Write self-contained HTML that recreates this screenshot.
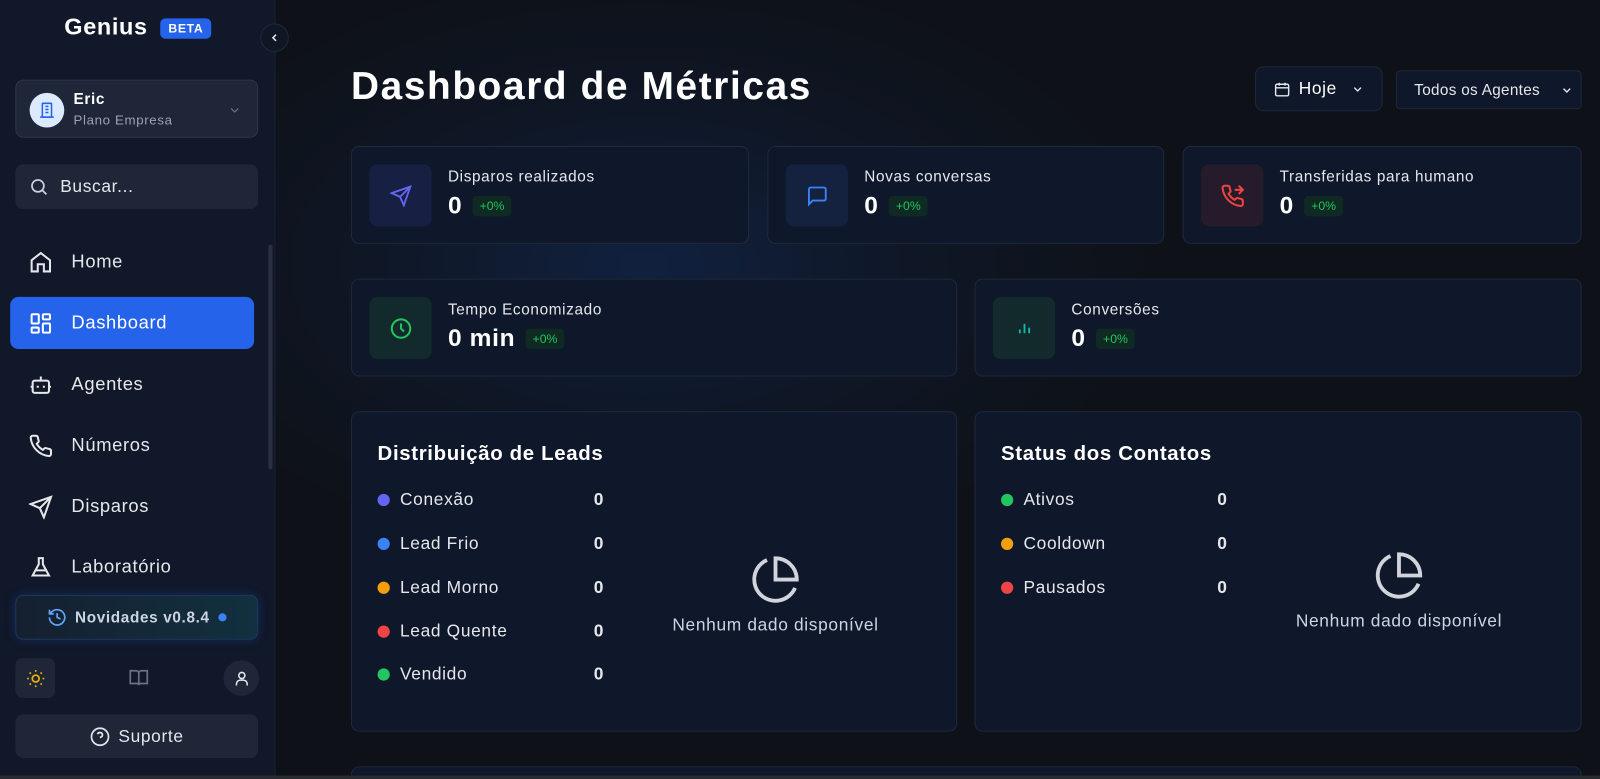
<!DOCTYPE html>
<html><head><meta charset="utf-8"><style>
*{box-sizing:border-box;margin:0;padding:0}
html,body{width:1600px;height:779px;overflow:hidden;background:#0e1117}
body{font-family:"Liberation Sans",sans-serif;color:#e5e7eb;position:relative;letter-spacing:0.04em}
#w{position:absolute;left:0;top:0;width:1568px;height:764px;transform:scale(1.0204);transform-origin:0 0}
.side{position:absolute;left:0;top:0;width:270px;height:760px;background:#101829;border-right:1px solid #1a2233}
.main{position:absolute;left:271px;top:0;width:1297px;height:760px;background:radial-gradient(ellipse 520px 300px at 360px 260px,#10213f 0%,#0f1624 55%,#0e1117 100%)}
.bottombar{position:absolute;left:0;top:760px;width:1568px;height:6px;background:#2a2b2f}
.abs{position:absolute}
.nav{position:absolute;left:10px;width:239px;height:51px;border-radius:8px;display:flex;align-items:center;padding-left:18px;font-size:18px;color:#e5e7eb}
.nav svg{margin-right:18px}
.card{position:absolute;background:#0f172a;border:1px solid #1e293b;border-radius:8px}
.ib{position:absolute;left:17px;top:17px;width:61px;height:61px;border-radius:8px;display:flex;align-items:center;justify-content:center}
.lbl{position:absolute;left:94px;top:21px;font-size:15px;color:#e5e7eb}
.val{position:absolute;left:94px;top:44px;font-size:24px;font-weight:bold;color:#fff;display:flex;align-items:center}
.pct{display:inline-block;margin-left:10px;background:#0f2a22;color:#22c55e;font-size:12px;font-weight:normal;padding:3px 7px;border-radius:4px;letter-spacing:0}
.row{position:absolute;left:25px;font-size:17px;color:#e5e7eb;display:flex;align-items:center;width:222px}
.row i{display:inline-block;width:12px;height:12px;border-radius:50%;margin-right:10px}
.row b{margin-left:auto;font-weight:bold}
</style></head><body><div id="w">
<div class="side">
  <div class="abs" style="left:63px;top:13px;font-size:23px;font-weight:bold;color:#fff">Genius</div>
  <div class="abs" style="left:157px;top:18px;background:#2563eb;color:#fff;font-size:12px;font-weight:bold;padding:3px 8px;border-radius:5px">BETA</div>
  <div class="abs" style="left:15px;top:78px;width:238px;height:57px;background:#1e2637;border:1px solid #2d3648;border-radius:8px">
    <div class="abs" style="left:13px;top:12px;width:34px;height:34px;border-radius:50%;background:#dbeafe;display:flex;align-items:center;justify-content:center">
      <svg width="18" height="18" viewBox="0 0 24 24" fill="none" stroke="#2563eb" stroke-width="2"><rect x="6" y="3" width="12" height="18" rx="1"/><path d="M3 21h18M10 7h4M10 11h4M10 15h4"/></svg></div>
    <div class="abs" style="left:56px;top:10px;font-size:15px;font-weight:bold;color:#fff">Eric</div>
    <div class="abs" style="left:56px;top:31px;font-size:13px;color:#9ca3af">Plano Empresa</div>
    <svg class="abs" style="left:207px;top:22px" width="14" height="14" viewBox="0 0 24 24" fill="none" stroke="#6b7280" stroke-width="2"><path d="M6 9l6 6 6-6"/></svg>
  </div>
  <div class="abs" style="left:15px;top:161px;width:238px;height:44px;background:#1e2637;border-radius:8px">
    <svg class="abs" style="left:13px;top:12px" width="20" height="20" viewBox="0 0 24 24" fill="none" stroke="#cbd5e1" stroke-width="2"><circle cx="11" cy="11" r="7"/><path d="M21 21l-5-5"/></svg>
    <div class="abs" style="left:44px;top:12px;font-size:17px;color:#e5e7eb">Buscar...</div>
  </div>
  <div class="nav" style="top:231px"><svg width="24" height="24" viewBox="0 0 24 24" fill="none" stroke="#e5e7eb" stroke-width="2"><path d="M3 10l9-7 9 7v11h-6v-7H9v7H3z"/></svg>Home</div>
  <div class="nav" style="top:291px;background:#2563eb;color:#fff"><svg width="24" height="24" viewBox="0 0 24 24" fill="none" stroke="#fff" stroke-width="2"><rect x="3" y="3" width="7" height="9" rx="1"/><rect x="14" y="3" width="7" height="5" rx="1"/><rect x="14" y="12" width="7" height="9" rx="1"/><rect x="3" y="16" width="7" height="5" rx="1"/></svg>Dashboard</div>
  <div class="nav" style="top:351px"><svg width="24" height="24" viewBox="0 0 24 24" fill="none" stroke="#e5e7eb" stroke-width="2"><rect x="4" y="8" width="16" height="12" rx="2"/><path d="M12 8V4M2 14h2M20 14h2M9 13v2M15 13v2"/></svg>Agentes</div>
  <div class="nav" style="top:411px"><svg width="24" height="24" viewBox="0 0 24 24" fill="none" stroke="#e5e7eb" stroke-width="2"><path d="M22 16.9v3a2 2 0 0 1-2.2 2A19.8 19.8 0 0 1 2.1 4.2 2 2 0 0 1 4.1 2h3a2 2 0 0 1 2 1.7c.1 1 .4 1.9.7 2.8a2 2 0 0 1-.5 2.1L8 9.9a16 16 0 0 0 6 6l1.3-1.3a2 2 0 0 1 2.1-.4c.9.3 1.8.6 2.8.7a2 2 0 0 1 1.7 2z"/></svg>Números</div>
  <div class="nav" style="top:471px"><svg width="24" height="24" viewBox="0 0 24 24" fill="none" stroke="#e5e7eb" stroke-width="2"><path d="M22 2L11 13M22 2l-7 20-4-9-9-4z"/></svg>Disparos</div>
  <div class="nav" style="top:530px"><svg width="24" height="24" viewBox="0 0 24 24" fill="none" stroke="#e5e7eb" stroke-width="2"><path d="M9 3h6M10 3v6L4 20h16L14 9V3M7 15h10"/></svg>Laboratório</div>
  <div class="abs" style="left:263px;top:240px;width:4px;height:220px;background:#283041;border-radius:2px"></div>
  <div class="abs" style="left:15px;top:583px;width:238px;height:44px;background:linear-gradient(90deg,#152030,#12303f);border:1px solid #1e3a5f;border-radius:8px;box-shadow:0 0 10px rgba(37,99,235,.25);display:flex;align-items:center;justify-content:center;font-size:15px;font-weight:bold;color:#cbd5e1">
    <svg width="20" height="20" viewBox="0 0 24 24" fill="none" stroke="#60a5fa" stroke-width="2" style="margin-right:8px"><path d="M3 12a9 9 0 1 0 3-6.7L3 8M3 3v5h5M12 7v5l4 2"/></svg>Novidades v0.8.4<span style="display:inline-block;width:8px;height:8px;border-radius:50%;background:#3b82f6;margin-left:9px"></span></div>
  <div class="abs" style="left:15px;top:645px;width:39px;height:39px;background:#1e2637;border-radius:7px;display:flex;align-items:center;justify-content:center">
    <svg width="20" height="20" viewBox="0 0 24 24" fill="none" stroke="#eab308" stroke-width="2"><circle cx="12" cy="12" r="4"/><path d="M12 2v2M12 20v2M4.9 4.9l1.4 1.4M17.7 17.7l1.4 1.4M2 12h2M20 12h2M4.9 19.1l1.4-1.4M17.7 6.3l1.4-1.4"/></svg></div>
  <svg class="abs" style="left:126px;top:654px" width="20" height="20" viewBox="0 0 24 24" fill="none" stroke="#6b7280" stroke-width="2"><path d="M2 4h7a3 3 0 0 1 3 3v14a2 2 0 0 0-2-2H2zM22 4h-7a3 3 0 0 0-3 3v14a2 2 0 0 1 2-2h8z"/></svg>
  <div class="abs" style="left:219px;top:647px;width:35px;height:35px;background:#1e2637;border-radius:50%;display:flex;align-items:center;justify-content:center">
    <svg width="18" height="18" viewBox="0 0 24 24" fill="none" stroke="#e5e7eb" stroke-width="2"><circle cx="12" cy="8" r="4"/><path d="M5 21v-2a5 5 0 0 1 5-5h4a5 5 0 0 1 5 5v2"/></svg></div>
  <div class="abs" style="left:15px;top:700px;width:238px;height:43px;background:#1e2637;border-radius:8px;display:flex;align-items:center;justify-content:center;font-size:17px;color:#e5e7eb">
    <svg width="20" height="20" viewBox="0 0 24 24" fill="none" stroke="#e5e7eb" stroke-width="2" style="margin-right:8px"><circle cx="12" cy="12" r="10"/><path d="M9.1 9a3 3 0 0 1 5.8 1c0 2-3 3-3 3M12 17h.01"/></svg>Suporte</div>
</div>
<div class="abs" style="left:255px;top:23px;width:28px;height:28px;border-radius:50%;background:#0f1624;border:1px solid #1e293b;display:flex;align-items:center;justify-content:center;z-index:3">
  <svg width="12" height="12" viewBox="0 0 24 24" fill="none" stroke="#e5e7eb" stroke-width="3"><path d="M15 6l-6 6 6 6"/></svg></div>
<div class="main">
  <div class="abs" style="left:73px;top:64px;font-size:38px;font-weight:bold;color:#fff;letter-spacing:1.6px">Dashboard de Métricas</div>
  <div class="abs" style="left:959px;top:65px;width:125px;height:44px;background:#0f172a;border:1px solid #1e293b;border-radius:8px;display:flex;align-items:center;justify-content:center;font-size:17px;color:#fff">
    <svg width="17" height="17" viewBox="0 0 24 24" fill="none" stroke="#e5e7eb" stroke-width="2" style="margin-right:8px"><rect x="3" y="5" width="18" height="16" rx="2"/><path d="M3 10h18M8 3v4M16 3v4"/></svg>Hoje<svg width="13" height="13" viewBox="0 0 24 24" fill="none" stroke="#e5e7eb" stroke-width="2.5" style="margin-left:14px"><path d="M6 9l6 6 6-6"/></svg></div>
  <div class="abs" style="left:1097px;top:69px;width:182px;height:38px;background:#0f172a;border:1px solid #1e293b;border-radius:4px;font-size:15px;color:#e5e7eb;padding:10px 0 0 17px;letter-spacing:0.02em">Todos os Agentes
    <svg class="abs" style="left:160px;top:12px" width="13" height="13" viewBox="0 0 24 24" fill="none" stroke="#e5e7eb" stroke-width="2.5"><path d="M6 9l6 6 6-6"/></svg></div>

  <div class="card" style="left:73px;top:143px;width:390px;height:96px"><div class="ib" style="background:#172042"><svg width="22" height="22" viewBox="0 0 24 24" fill="none" stroke="#6366f1" stroke-width="2"><path d="M22 2L11 13M22 2l-7 20-4-9-9-4z"/></svg></div><div class="lbl">Disparos realizados</div><div class="val">0<span class="pct">+0%</span></div></div>
  <div class="card" style="left:481px;top:143px;width:389px;height:96px"><div class="ib" style="background:#15223f"><svg width="22" height="22" viewBox="0 0 24 24" fill="none" stroke="#3b82f6" stroke-width="2"><path d="M21 15a2 2 0 0 1-2 2H7l-4 4V5a2 2 0 0 1 2-2h14a2 2 0 0 1 2 2z"/></svg></div><div class="lbl">Novas conversas</div><div class="val">0<span class="pct">+0%</span></div></div>
  <div class="card" style="left:888px;top:143px;width:391px;height:96px"><div class="ib" style="background:#251b2a"><svg width="24" height="24" viewBox="0 0 24 24" fill="none" stroke="#ef4444" stroke-width="2"><path d="M22 16.9v3a2 2 0 0 1-2.2 2A19.8 19.8 0 0 1 2.1 4.2 2 2 0 0 1 4.1 2h3a2 2 0 0 1 2 1.7c.1 1 .4 1.9.7 2.8a2 2 0 0 1-.5 2.1L8 9.9a16 16 0 0 0 6 6l1.3-1.3a2 2 0 0 1 2.1-.4c.9.3 1.8.6 2.8.7a2 2 0 0 1 1.7 2zM14 6h7M18 2l4 4-4 4"/></svg></div><div class="lbl">Transferidas para humano</div><div class="val">0<span class="pct">+0%</span></div></div>

  <div class="card" style="left:73px;top:273px;width:594px;height:96px"><div class="ib" style="background:#122a2c"><svg width="24" height="24" viewBox="0 0 24 24" fill="none" stroke="#22c55e" stroke-width="2"><circle cx="12" cy="12" r="9"/><path d="M12 7v5l3 3"/></svg></div><div class="lbl">Tempo Economizado</div><div class="val">0 min<span class="pct">+0%</span></div></div>
  <div class="card" style="left:684px;top:273px;width:595px;height:96px"><div class="ib" style="background:#122a2c"><svg width="22" height="22" viewBox="0 0 24 24" fill="none" stroke="#14b8a6" stroke-width="2"><path d="M7 17v-4M12 17V7M17 17v-6"/></svg></div><div class="lbl">Conversões</div><div class="val">0<span class="pct">+0%</span></div></div>

  <div class="card" style="left:73px;top:403px;width:594px;height:314px">
    <div class="abs" style="left:25px;top:30px;font-size:20px;font-weight:bold;color:#fff">Distribuição de Leads</div>
    <div class="row" style="top:76px"><i style="background:#6366f1"></i>Conexão<b>0</b></div>
    <div class="row" style="top:119px"><i style="background:#3b82f6"></i>Lead Frio<b>0</b></div>
    <div class="row" style="top:162px"><i style="background:#f59e0b"></i>Lead Morno<b>0</b></div>
    <div class="row" style="top:205px"><i style="background:#ef4444"></i>Lead Quente<b>0</b></div>
    <div class="row" style="top:247px"><i style="background:#22c55e"></i>Vendido<b>0</b></div>
    <svg class="abs" style="left:390px;top:139px" width="50" height="50" viewBox="0 0 24 24" fill="none" stroke="#d1d5db" stroke-width="1.8"><path d="M21.2 15.9A10 10 0 1 1 8 2.8"/><path d="M22 12A10 10 0 0 0 12 2v10z"/></svg>
    <div class="abs" style="left:240px;top:199px;width:350px;text-align:center;font-size:17px;color:#cbd5e1">Nenhum dado disponível</div>
  </div>
  <div class="card" style="left:684px;top:403px;width:595px;height:314px">
    <div class="abs" style="left:25px;top:30px;font-size:20px;font-weight:bold;color:#fff">Status dos Contatos</div>
    <div class="row" style="top:76px"><i style="background:#22c55e"></i>Ativos<b>0</b></div>
    <div class="row" style="top:119px"><i style="background:#f59e0b"></i>Cooldown<b>0</b></div>
    <div class="row" style="top:162px"><i style="background:#ef4444"></i>Pausados<b>0</b></div>
    <svg class="abs" style="left:390px;top:135px" width="50" height="50" viewBox="0 0 24 24" fill="none" stroke="#d1d5db" stroke-width="1.8"><path d="M21.2 15.9A10 10 0 1 1 8 2.8"/><path d="M22 12A10 10 0 0 0 12 2v10z"/></svg>
    <div class="abs" style="left:240px;top:195px;width:350px;text-align:center;font-size:17px;color:#cbd5e1">Nenhum dado disponível</div>
  </div>
  <div class="card" style="left:73px;top:751px;width:1206px;height:40px"></div>
</div>
<div class="bottombar"></div>
</div></body></html>
